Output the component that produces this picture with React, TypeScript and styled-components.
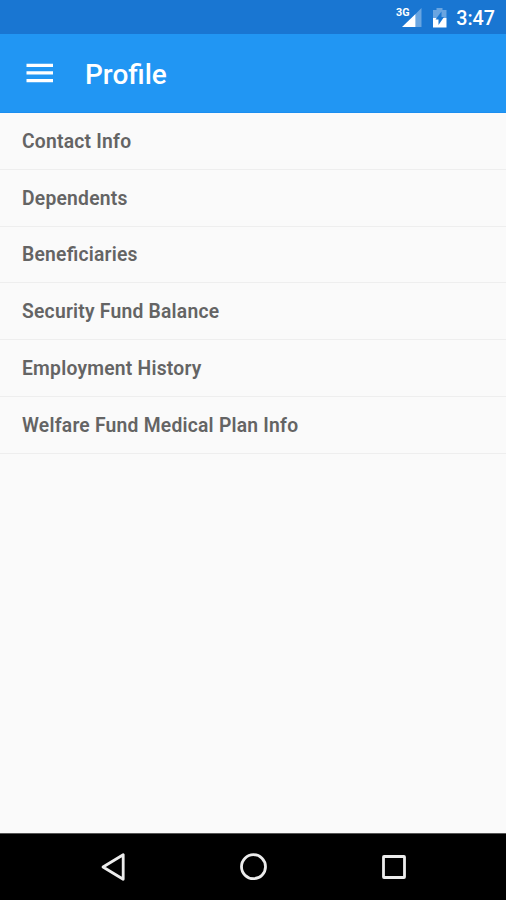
import React from "react";
import styled, { createGlobalStyle } from "styled-components";

const GlobalStyle = createGlobalStyle`
  * { box-sizing: border-box; }
  body { margin: 0; font-family: Roboto, sans-serif; background: #fafafa; }
`;

const Screen = styled.div`
  display: flex;
  flex-direction: column;
  height: 900px;
  overflow: hidden;
  background: #fafafa;
`;

const StatusBar = styled.header`
  display: flex;
  align-items: center;
  justify-content: flex-end;
  flex: none;
  height: 34px;
  padding: 2px 11px 0 0;
  background: #1976d2;
  color: #fff;
`;

const StatusIcons = styled.svg`
  flex: none;
  margin-right: 9px;
`;

const Clock = styled.time`
  padding-top: 2px;
  font-size: 19.7px;
  font-weight: 500;
  line-height: 32px;
`;

const Toolbar = styled.div`
  display: flex;
  align-items: center;
  flex: none;
  height: 79px;
  padding-left: 26px;
  background: #2196f3;
  border-bottom: 1px solid #1b8ef0;
  color: #fff;
`;

const MenuButton = styled.button`
  display: flex;
  padding: 0;
  border: 0;
  background: none;
  color: inherit;
`;

const Title = styled.h1`
  margin: 4px 0 0 32px;
  font-size: 28px;
  font-weight: 500;
  line-height: 34px;
`;

const List = styled.ul`
  flex: 1;
  margin: 0;
  padding: 0;
  list-style: none;
`;

const Row = styled.li`
  display: flex;
  align-items: center;
  height: 56.8px;
  padding: 1px 22px 0;
  border-bottom: 1px solid #eeeeee;
  color: #646464;
  font-size: 19.3px;
  font-weight: 600;
  letter-spacing: 0.23px;
  font-feature-settings: "liga" 1;
`;

const NavBar = styled.nav`
  display: flex;
  align-items: center;
  justify-content: space-between;
  flex: none;
  height: 67px;
  padding: 0 98px;
  background: #000;
  border-top: 1px solid #555;
`;

const NavIcon = styled.svg`
  fill: none;
  stroke: #ececec;
  stroke-width: 2.8;
  stroke-linejoin: round;
`;

const items = [
  "Contact Info",
  "Dependents",
  "Beneficiaries",
  "Security Fund Balance",
  "Employment History",
  "Welfare Fund Medical Plan Info",
];

export default function App() {
  return (
    <Screen>
      <GlobalStyle />
      <StatusBar>
        <StatusIcons width="52" height="32" viewBox="0 0 52 32" fill="#fff">
          <text x="1" y="14.3" fontSize="11.5" fontWeight="700" textLength="13.5" lengthAdjust="spacingAndGlyphs">3G</text>
          <path d="M26.5 6V25H20.5V12Z" opacity=".35" />
          <path d="M20.5 12V25H7Z" />
          <path d="M38 8H41.5V6H47.5V8H51.5V16H38Z" opacity=".35" />
          <path d="M38 16H51.5V25.5H38Z" />
          <path d="M46.5 9.5V15H49L43.5 23V17.5H40.5Z" fill="#1976d2" />
        </StatusIcons>
        <Clock>3:47</Clock>
      </StatusBar>
      <Toolbar>
        <MenuButton aria-label="Menu">
          <svg width="27" height="20" viewBox="0 0 27 20" fill="currentColor">
            <path d="M.5 .8H27V4H.5ZM.5 8.3H27V11.5H.5ZM.5 16H27V19.2H.5Z" />
          </svg>
        </MenuButton>
        <Title>Profile</Title>
      </Toolbar>
      <List>
        {items.map((label) => (
          <Row key={label}>{label}</Row>
        ))}
      </List>
      <NavBar>
        <NavIcon width="30" height="30" viewBox="0 0 30 30">
          <path d="M25.2 2.7V27.3L5 15Z" />
        </NavIcon>
        <NavIcon width="30" height="30" viewBox="0 0 30 30">
          <circle cx="15.5" cy="14.7" r="12" />
        </NavIcon>
        <NavIcon width="30" height="30" viewBox="0 0 30 30">
          <rect x="5.5" y="4.5" width="21" height="21" rx=".5" />
        </NavIcon>
      </NavBar>
    </Screen>
  );
}
